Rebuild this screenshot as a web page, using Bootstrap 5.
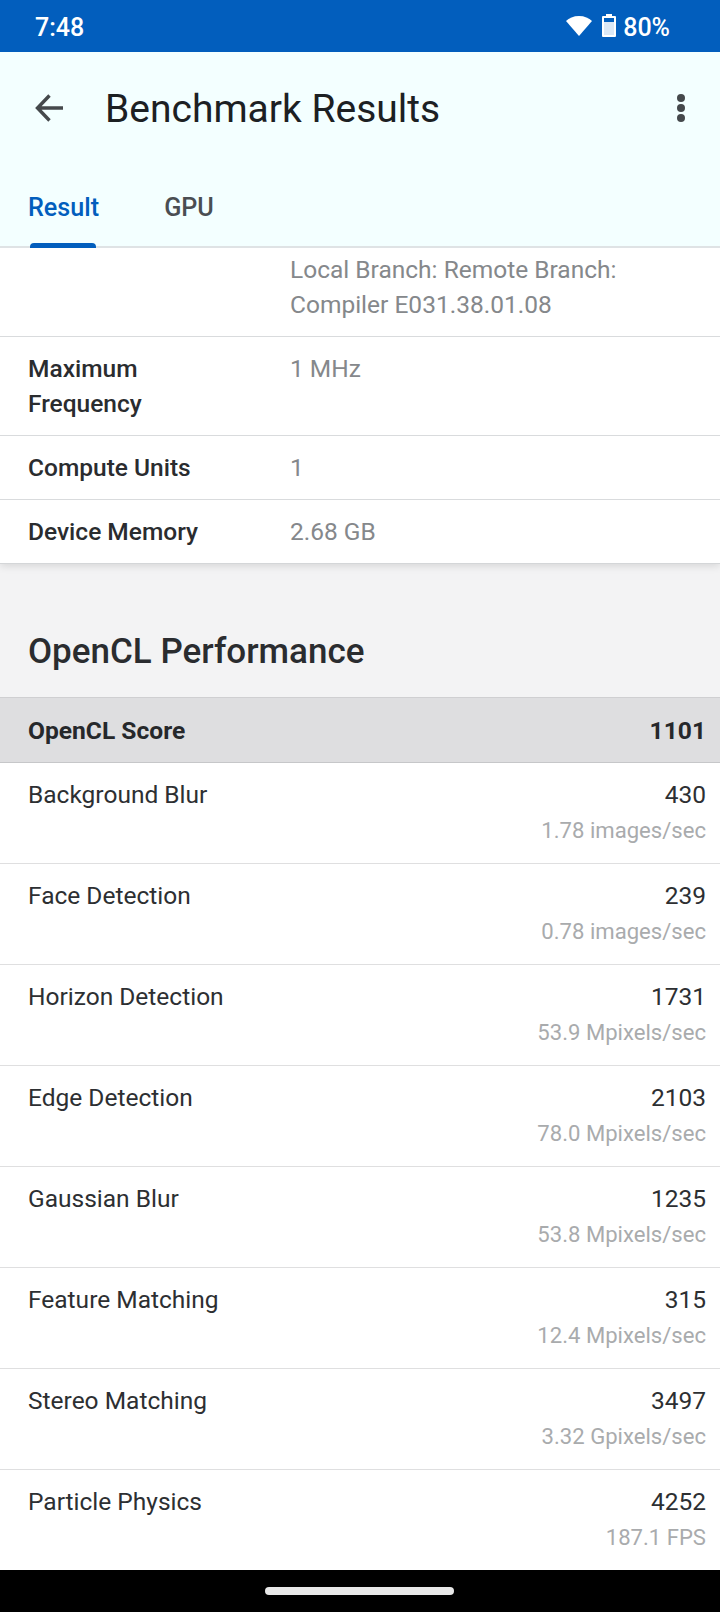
<!DOCTYPE html>
<html lang="en"><head><meta charset="utf-8"><title>Benchmark Results</title>
<link href="https://cdn.jsdelivr.net/npm/bootstrap@5.3.0/dist/css/bootstrap.min.css" rel="stylesheet">
<style>
html,body{height:1612px;width:720px;overflow:hidden;margin:0}
body{font-family:Roboto,"Liberation Sans",sans-serif;background:#f3f3f4;color:#26282b}
.shell{height:1612px}
.sbar{height:52px;background:#025ebd;color:#fff;padding:3px 50px 0 35px;font-size:25px;font-weight:500;line-height:49px;flex:none}
.sicons{gap:7px}
.wifi{margin-right:3px;margin-bottom:3px}
.batt{margin-bottom:4px}
.apbar{height:196px;background:#f3ffff;border-bottom:2px solid #dfe3e5;flex:none}
.aprow{height:112px;padding:0 34px 0 35px}
.aptitle{font-size:39px;margin:2px 0 0 42px;font-weight:400;color:#1c2023;line-height:110px;flex:1}
.tabx{height:82px;padding-left:28px;gap:65px;font-size:25.2px;font-weight:500;color:#4a4e52;padding-top:5px}
.tabx .tabon{color:#025ebd;position:relative}
.tabon::after{content:"";position:absolute;left:2px;width:66px;height:5px;bottom:-22px;background:#025ebd;border-radius:4px 4px 0 0}
.scroller{flex:1;overflow:hidden;min-height:0}
.infocard{background:#fff;box-shadow:0 2px 8px rgba(0,0,0,.12);border-bottom:1px solid #d4d6d8}
.inforow{display:flex;border-bottom:1px solid #d9dbdd;padding:14px 12px 14px 28px;font-size:24.5px;line-height:35px}
.inforow:last-child{border-bottom:0}
.inforow.rowcut{padding-top:4px}
.ilabel{width:262px;font-weight:500;flex:none;color:#2a2c2f}
.ivalue{color:#85888b}
.sechead{font-size:35px;font-weight:500;padding:0 28px;height:133px;line-height:176px;margin:0;color:#2a2c2f}
.scorerow{background:#dedee0;border-top:1px solid #cfcfd1;border-bottom:1px solid #c6c7c9;height:66px;padding:0 14px 0 28px;font-size:24.6px;font-weight:700;line-height:66px}
.benchlist{background:#fff}
.benchrow{height:101px;border-bottom:1px solid #dfdfe0;padding:14px 14px 0 28px;font-size:24.5px;line-height:35px;color:#2d2f32;background:#fff}
.subval{font-size:22.1px;color:#a9abad;display:block;line-height:37px}
.navpill{height:42px;background:#000;flex:none}
.navpill i{display:block;width:189px;height:8px;border-radius:4px;background:#e8e8e8;margin-right:2px}
</style></head>
<body>
<div class="shell d-flex flex-column">
  <div class="sbar d-flex justify-content-between">
    <span>7:48</span>
    <span class="d-flex align-items-center sicons">
      <svg class="wifi" width="26" height="20" viewBox="0 0 26 20"><path fill="#fff" d="M13 20 0 5C3 2 7.500 0 13 0s10 2 13 5z"/></svg>
      <svg class="batt" width="14" height="23" viewBox="0 0 14 23"><path fill="#fff" fill-rule="evenodd" d="M4 0h6v2h3a1 1 0 0 1 1 1v19a1 1 0 0 1-1 1H1a1 1 0 0 1-1-1V3a1 1 0 0 1 1-1h3zM2 4v17h10V4z"/><path fill="#dbe8f6" d="M2 8h10v13H2z"/></svg>
      <span>80%</span>
    </span>
  </div>
  <div class="apbar">
    <div class="aprow d-flex align-items-center">
      <svg width="28" height="28" viewBox="0 0 28 28" fill="none" stroke="#45494c" stroke-width="3.400"><path d="M28 14H3M14.500 1.500 2.500 14l12 12.500"/></svg>
      <h1 class="aptitle">Benchmark Results</h1>
      <svg width="10" height="28" viewBox="0 0 10 28" fill="#45494c"><circle cx="5" cy="4" r="4"/><circle cx="5" cy="14" r="4"/><circle cx="5" cy="24" r="4"/></svg>
    </div>
    <div class="tabx d-flex align-items-center">
      <span class="tabon">Result</span><span>GPU</span>
    </div>
  </div>
  <div class="scroller">
    <div class="infocard">
      <div class="inforow rowcut"><div class="ilabel"></div><div class="ivalue">Local Branch: Remote Branch:<br>Compiler E031.38.01.08</div></div>
      <div class="inforow"><div class="ilabel">Maximum<br>Frequency</div><div class="ivalue">1 MHz</div></div>
      <div class="inforow"><div class="ilabel">Compute Units</div><div class="ivalue">1</div></div>
      <div class="inforow"><div class="ilabel">Device Memory</div><div class="ivalue">2.68 GB</div></div>
    </div>
    <h2 class="sechead">OpenCL Performance</h2>
    <div class="scorerow d-flex justify-content-between"><span>OpenCL Score</span><span>1101</span></div>
    <div class="benchlist">
      <div class="benchrow d-flex justify-content-between"><span>Background Blur</span><span class="text-end">430<span class="subval">1.78 images/sec</span></span></div>
      <div class="benchrow d-flex justify-content-between"><span>Face Detection</span><span class="text-end">239<span class="subval">0.78 images/sec</span></span></div>
      <div class="benchrow d-flex justify-content-between"><span>Horizon Detection</span><span class="text-end">1731<span class="subval">53.9 Mpixels/sec</span></span></div>
      <div class="benchrow d-flex justify-content-between"><span>Edge Detection</span><span class="text-end">2103<span class="subval">78.0 Mpixels/sec</span></span></div>
      <div class="benchrow d-flex justify-content-between"><span>Gaussian Blur</span><span class="text-end">1235<span class="subval">53.8 Mpixels/sec</span></span></div>
      <div class="benchrow d-flex justify-content-between"><span>Feature Matching</span><span class="text-end">315<span class="subval">12.4 Mpixels/sec</span></span></div>
      <div class="benchrow d-flex justify-content-between"><span>Stereo Matching</span><span class="text-end">3497<span class="subval">3.32 Gpixels/sec</span></span></div>
      <div class="benchrow d-flex justify-content-between"><span>Particle Physics</span><span class="text-end">4252<span class="subval">187.1 FPS</span></span></div>
    </div>
  </div>
  <div class="navpill d-flex align-items-center justify-content-center"><i></i></div>
</div>
<script src="https://cdn.jsdelivr.net/npm/bootstrap@5.3.0/dist/js/bootstrap.bundle.min.js"></script>
</body></html>
